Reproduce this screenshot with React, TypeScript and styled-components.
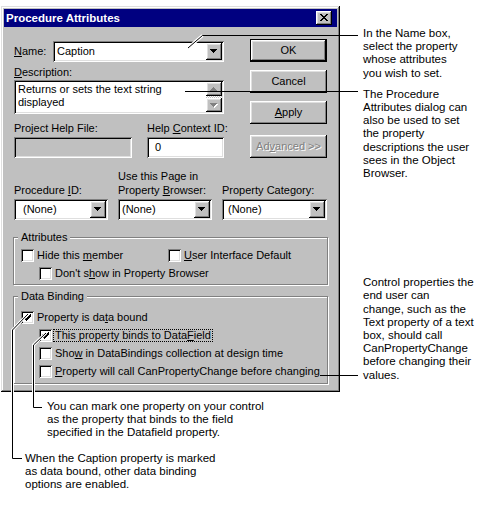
import React from "react";
import styled, { createGlobalStyle } from "styled-components";

const GlobalStyle = createGlobalStyle`
  html, body {
    margin: 0;
    padding: 0;
    background: #fff;
  }
  body {
    font-family: "Liberation Sans", Arial, sans-serif;
    color: #000;
  }
  * {
    box-sizing: border-box;
  }
`;

// classic 3d bevels
const raised = `box-shadow: inset -1px -1px #000, inset 1px 1px #fff, inset -2px -2px #808080, inset 2px 2px #dfdfdf;`;
const sunken = `box-shadow: inset 1px 1px #808080, inset -1px -1px #fff, inset 2px 2px #000, inset -2px -2px #dfdfdf;`;

const Page = styled.div`
  position: relative;
  width: 479px;
  height: 506px;
  padding: 6px 0 0 1px;
  overflow: hidden;
`;

const TopRow = styled.div`
  display: flex;
  align-items: flex-start;
`;

const Window = styled.div`
  width: 339px;
  height: 386px;
  flex-shrink: 0;
  padding: 3px;
  background: #c0c0c0;
  box-shadow: inset -1px -1px #000, inset 1px 1px #dfdfdf, inset -2px -2px #808080,
    inset 2px 2px #fff;
  display: flex;
  flex-direction: column;
  font-size: 11px;
  line-height: 13px;
`;

const TitleBar = styled.div`
  height: 18px;
  background: #000080;
  display: flex;
  align-items: center;
  padding: 0 5px 0 2px;
`;

const Title = styled.span`
  flex: 1;
  color: #fff;
  font-weight: bold;
  font-size: 11.5px;
  white-space: nowrap;
`;

const CloseButton = styled.div`
  width: 16px;
  height: 14px;
  background: #c0c0c0;
  ${raised}
  display: flex;
  align-items: center;
  justify-content: center;
  padding: 0 1px 1px 0;
`;

const Body = styled.div`
  padding: 0 9px;
  display: flex;
  flex-direction: column;
`;

const TopSection = styled.div`
  display: flex;
  align-items: flex-start;
  padding-left: 1px;
`;

const Fields = styled.div`
  width: 210px;
  padding-top: 14px;
  display: flex;
  flex-direction: column;
`;

const NameRow = styled.div`
  display: flex;
  align-items: center;
  height: 21px;
`;

const InlineLabel = styled.span`
  width: 39px;
  flex-shrink: 0;
`;

const Label = styled.div<{ $mt?: number; $lh?: number }>`
  margin-top: ${({ $mt }) => $mt ?? 0}px;
  line-height: ${({ $lh }) => $lh ?? 13}px;
  white-space: nowrap;
`;

const Key = styled.span`
  text-decoration: underline;
`;

const Combo = styled.div`
  flex: 1;
  height: 21px;
  background: #fff;
  ${sunken}
  display: flex;
  align-items: center;
  padding: 2px;
`;

const ComboText = styled.span<{ $pad: number }>`
  flex: 1;
  padding-left: ${({ $pad }) => $pad}px;
  white-space: nowrap;
`;

const DropButton = styled.div`
  width: 16px;
  height: 17px;
  flex-shrink: 0;
  background: #c0c0c0;
  ${raised}
  display: flex;
  align-items: center;
  justify-content: center;
  padding: 0 1px 1px 0;
`;

const Memo = styled.div`
  margin-top: 1px;
  height: 34px;
  background: #fff;
  ${sunken}
  padding: 2px;
  display: flex;
`;

const MemoText = styled.div`
  flex: 1;
  padding: 1px 2px;
  line-height: 13px;
`;

const ScrollBar = styled.div`
  width: 16px;
  display: flex;
  flex-direction: column;
  justify-content: space-between;
  background: repeating-conic-gradient(#c0c0c0 0 25%, #fff 0 50%) 0 0 / 2px 2px;
`;

const ScrollButton = styled.div`
  height: 14px;
  background: #c0c0c0;
  ${raised}
  display: flex;
  align-items: center;
  justify-content: center;
`;

const HelpGrid = styled.div`
  margin-top: 8px;
  display: grid;
  grid-template-columns: 118px 77px;
  column-gap: 15px;
  row-gap: 2px;
`;

const TextInput = styled.div<{ $disabled?: boolean }>`
  height: 21px;
  background: ${({ $disabled }) => ($disabled ? "#c0c0c0" : "#fff")};
  ${sunken}
  padding: 0 8px;
  display: flex;
  align-items: center;
`;

const ButtonColumn = styled.div`
  margin-left: 26px;
  padding-top: 12px;
  display: flex;
  flex-direction: column;
  gap: 8px;
`;

const Button = styled.div<{ $default?: boolean; $disabled?: boolean; $mt?: number }>`
  width: 77px;
  height: 23px;
  margin-top: ${({ $mt }) => $mt ?? 0}px;
  background: #c0c0c0;
  border: ${({ $default }) => ($default ? "1px solid #000" : "none")};
  ${raised}
  display: flex;
  align-items: center;
  justify-content: center;
  color: ${({ $disabled }) => ($disabled ? "#808080" : "#000")};
  text-shadow: ${({ $disabled }) => ($disabled ? "1px 1px 0 #fff" : "none")};
  white-space: nowrap;
`;

const ComboGrid = styled.div`
  margin: 11px 0 0 1px;
  display: grid;
  grid-template-columns: 94px 94px 105px;
  column-gap: 10px;
  row-gap: 2px;
  align-items: end;
`;

const Group = styled.div<{ $mt: number; $pb: number }>`
  margin-top: ${({ $mt }) => $mt}px;
  border: 1px solid #808080;
  box-shadow: inset 1px 1px #fff, 1px 1px #fff;
  padding: 0 7px ${({ $pb }) => $pb}px;
`;

const GroupTitle = styled.div`
  display: table;
  margin: -7px 0 0 -3px;
  padding: 0 3px;
  background: #c0c0c0;
  line-height: 13px;
`;

const CheckList = styled.div<{ $mt: number }>`
  margin-top: ${({ $mt }) => $mt}px;
  display: flex;
  flex-direction: column;
  gap: 5px;
`;

const CheckRow = styled.div<{ $indent?: boolean }>`
  height: 13px;
  display: flex;
  align-items: center;
  padding-left: ${({ $indent }) => ($indent ? 18 : 0)}px;
`;

const CheckItem = styled.div<{ $width?: number }>`
  display: flex;
  align-items: center;
  gap: 1px;
  width: ${({ $width }) => ($width ? `${$width}px` : "auto")};
`;

const Box = styled.span`
  width: 13px;
  height: 13px;
  flex-shrink: 0;
  background: #fff;
  ${sunken}
  display: flex;
  align-items: center;
  justify-content: center;
`;

const CheckText = styled.span<{ $focus?: boolean }>`
  line-height: 11px;
  padding: 0 1px;
  border: 1px dotted ${({ $focus }) => ($focus ? "#000" : "transparent")};
  white-space: nowrap;
`;

const NotesColumn = styled.div`
  margin-left: 23px;
  display: flex;
  flex-direction: column;
`;

const Note = styled.div<{ $mt: number; $left?: number }>`
  margin-top: ${({ $mt }) => $mt}px;
  padding-left: ${({ $left }) => $left ?? 0}px;
  font-size: 11.5px;
  line-height: 13.2px;
  white-space: nowrap;
`;

const Overlay = styled.svg`
  position: absolute;
  left: 0;
  top: 0;
  pointer-events: none;
`;

const DownArrow = () => (
  <svg width="7" height="4" viewBox="0 0 7 4">
    <path d="M0 0h7v1H0zM1 1h5v1H1zM2 2h3v1H2zM3 3h1v1H3z" fill="#000" />
  </svg>
);

const DisabledArrow = ({ up }: { up?: boolean }) => {
  const d = up
    ? "M3 0h1v1H3zM2 1h3v1H2zM1 2h5v1H1zM0 3h7v1H0z"
    : "M0 0h7v1H0zM1 1h5v1H1zM2 2h3v1H2zM3 3h1v1H3z";
  return (
    <svg width="8" height="5" viewBox="0 0 8 5">
      <path d={d} fill="#fff" transform="translate(1 1)" />
      <path d={d} fill="#808080" />
    </svg>
  );
};

const Check = ({ checked }: { checked?: boolean }) => (
  <Box>
    {checked && (
      <svg width="7" height="7" viewBox="0 0 7 7">
        <path
          d="M6 0h1v3H6zM5 1h1v3H5zM4 2h1v3H4zM3 3h1v3H3zM2 4h1v3H2zM1 3h1v3H1zM0 2h1v3H0z"
          fill="#000"
        />
      </svg>
    )}
  </Box>
);

export default function App() {
  return (
    <>
      <GlobalStyle />
      <Page>
        <TopRow>
          <Window>
            <TitleBar>
              <Title>Procedure Attributes</Title>
              <CloseButton>
                <svg width="8" height="7" viewBox="0 0 8 7">
                  <path
                    d="M0 0h2v1H0zM6 0h2v1H6zM1 1h2v1H1zM5 1h2v1H5zM2 2h4v1H2zM3 3h2v1H3zM2 4h4v1H2zM1 5h2v1H1zM5 5h2v1H5zM0 6h2v1H0zM6 6h2v1H6z"
                    fill="#000"
                  />
                </svg>
              </CloseButton>
            </TitleBar>
            <Body>
              <TopSection>
                <Fields>
                  <NameRow>
                    <InlineLabel>
                      <Key>N</Key>ame:
                    </InlineLabel>
                    <Combo>
                      <ComboText $pad={2}>Caption</ComboText>
                      <DropButton>
                        <DownArrow />
                      </DropButton>
                    </Combo>
                  </NameRow>
                  <Label $mt={4}>
                    <Key>D</Key>escription:
                  </Label>
                  <Memo>
                    <MemoText>
                      Returns or sets the text string
                      <br />
                      displayed
                    </MemoText>
                    <ScrollBar>
                      <ScrollButton>
                        <DisabledArrow up />
                      </ScrollButton>
                      <ScrollButton>
                        <DisabledArrow />
                      </ScrollButton>
                    </ScrollBar>
                  </Memo>
                  <HelpGrid>
                    <Label>Project Help File:</Label>
                    <Label>
                      Help <Key>C</Key>ontext ID:
                    </Label>
                    <TextInput $disabled />
                    <TextInput>0</TextInput>
                  </HelpGrid>
                </Fields>
                <ButtonColumn>
                  <Button $default>OK</Button>
                  <Button>Cancel</Button>
                  <Button>
                    <Key>A</Key>pply
                  </Button>
                  <Button $disabled $mt={3}>
                    Ad<Key>v</Key>anced &gt;&gt;
                  </Button>
                </ButtonColumn>
              </TopSection>

              <ComboGrid>
                <Label $lh={14}>
                  Procedure <Key>I</Key>D:
                </Label>
                <Label $lh={14}>
                  Use this Page in
                  <br />
                  Property <Key>B</Key>rowser:
                </Label>
                <Label $lh={14}>
                  Property Cate<Key>g</Key>ory:
                </Label>
                <Combo>
                  <ComboText $pad={7}>(None)</ComboText>
                  <DropButton>
                    <DownArrow />
                  </DropButton>
                </Combo>
                <Combo>
                  <ComboText $pad={2}>(None)</ComboText>
                  <DropButton>
                    <DownArrow />
                  </DropButton>
                </Combo>
                <Combo>
                  <ComboText $pad={4}>(None)</ComboText>
                  <DropButton>
                    <DownArrow />
                  </DropButton>
                </Combo>
              </ComboGrid>

              <Group $mt={17} $pb={4}>
                <GroupTitle>Attributes</GroupTitle>
                <CheckList $mt={5}>
                  <CheckRow>
                    <CheckItem $width={147}>
                      <Check />
                      <CheckText>
                        Hide this <Key>m</Key>ember
                      </CheckText>
                    </CheckItem>
                    <CheckItem>
                      <Check />
                      <CheckText>
                        <Key>U</Key>ser Interface Default
                      </CheckText>
                    </CheckItem>
                  </CheckRow>
                  <CheckRow $indent>
                    <CheckItem>
                      <Check />
                      <CheckText>
                        Don't s<Key>h</Key>ow in Property Browser
                      </CheckText>
                    </CheckItem>
                  </CheckRow>
                </CheckList>
              </Group>

              <Group $mt={11} $pb={5}>
                <GroupTitle>Data Binding</GroupTitle>
                <CheckList $mt={8}>
                  <CheckRow>
                    <CheckItem>
                      <Check checked />
                      <CheckText>
                        Property is da<Key>t</Key>a bound
                      </CheckText>
                    </CheckItem>
                  </CheckRow>
                  <CheckRow $indent>
                    <CheckItem>
                      <Check checked />
                      <CheckText $focus>
                        This property binds to Data<Key>F</Key>ield
                      </CheckText>
                    </CheckItem>
                  </CheckRow>
                  <CheckRow $indent>
                    <CheckItem>
                      <Check />
                      <CheckText>
                        Sho<Key>w</Key> in DataBindings collection at design time
                      </CheckText>
                    </CheckItem>
                  </CheckRow>
                  <CheckRow $indent>
                    <CheckItem>
                      <Check />
                      <CheckText>
                        <Key>P</Key>roperty will call CanPropertyChange before changing
                      </CheckText>
                    </CheckItem>
                  </CheckRow>
                </CheckList>
              </Group>
            </Body>
          </Window>

          <NotesColumn>
            <Note $mt={21}>
              In the Name box,
              <br />
              select the property
              <br />
              whose attributes
              <br />
              you wish to set.
            </Note>
            <Note $mt={8}>
              The Procedure
              <br />
              Attributes dialog can
              <br />
              also be used to set
              <br />
              the property
              <br />
              descriptions the user
              <br />
              sees in the Object
              <br />
              Browser.
            </Note>
            <Note $mt={96}>
              Control properties the
              <br />
              end user can
              <br />
              change, such as the
              <br />
              Text property of a text
              <br />
              box, should call
              <br />
              CanPropertyChange
              <br />
              before changing their
              <br />
              values.
            </Note>
          </NotesColumn>
        </TopRow>

        <Note $mt={8} $left={46}>
          You can mark one property on your control
          <br />
          as the property that binds to the field
          <br />
          specified in the Datafield property.
        </Note>
        <Note $mt={12} $left={24}>
          When the Caption property is marked
          <br />
          as data bound, other data binding
          <br />
          options are enabled.
        </Note>

        <Overlay width="479" height="506" viewBox="0 0 479 506">
          <g fill="none" stroke="#fff" strokeWidth="3">
            <path d="M188 48 L202.5 35.5" />
            <path d="M28 314 L12.5 330 L12.5 458.5 L22 458.5" />
            <path d="M46 333 L33.5 345 L33.5 407.5 L42 407.5" />
          </g>
          <g fill="none" stroke="#000" strokeWidth="1">
            <path d="M188 48 L202.5 35.5 L358 35.5" />
            <path d="M185 91.5 L358 91.5" />
            <path d="M320 375.5 L358 375.5" />
            <path d="M28 314 L12.5 330 L12.5 458.5 L22 458.5" />
            <path d="M46 333 L33.5 345 L33.5 407.5 L42 407.5" />
          </g>
        </Overlay>
      </Page>
    </>
  );
}
